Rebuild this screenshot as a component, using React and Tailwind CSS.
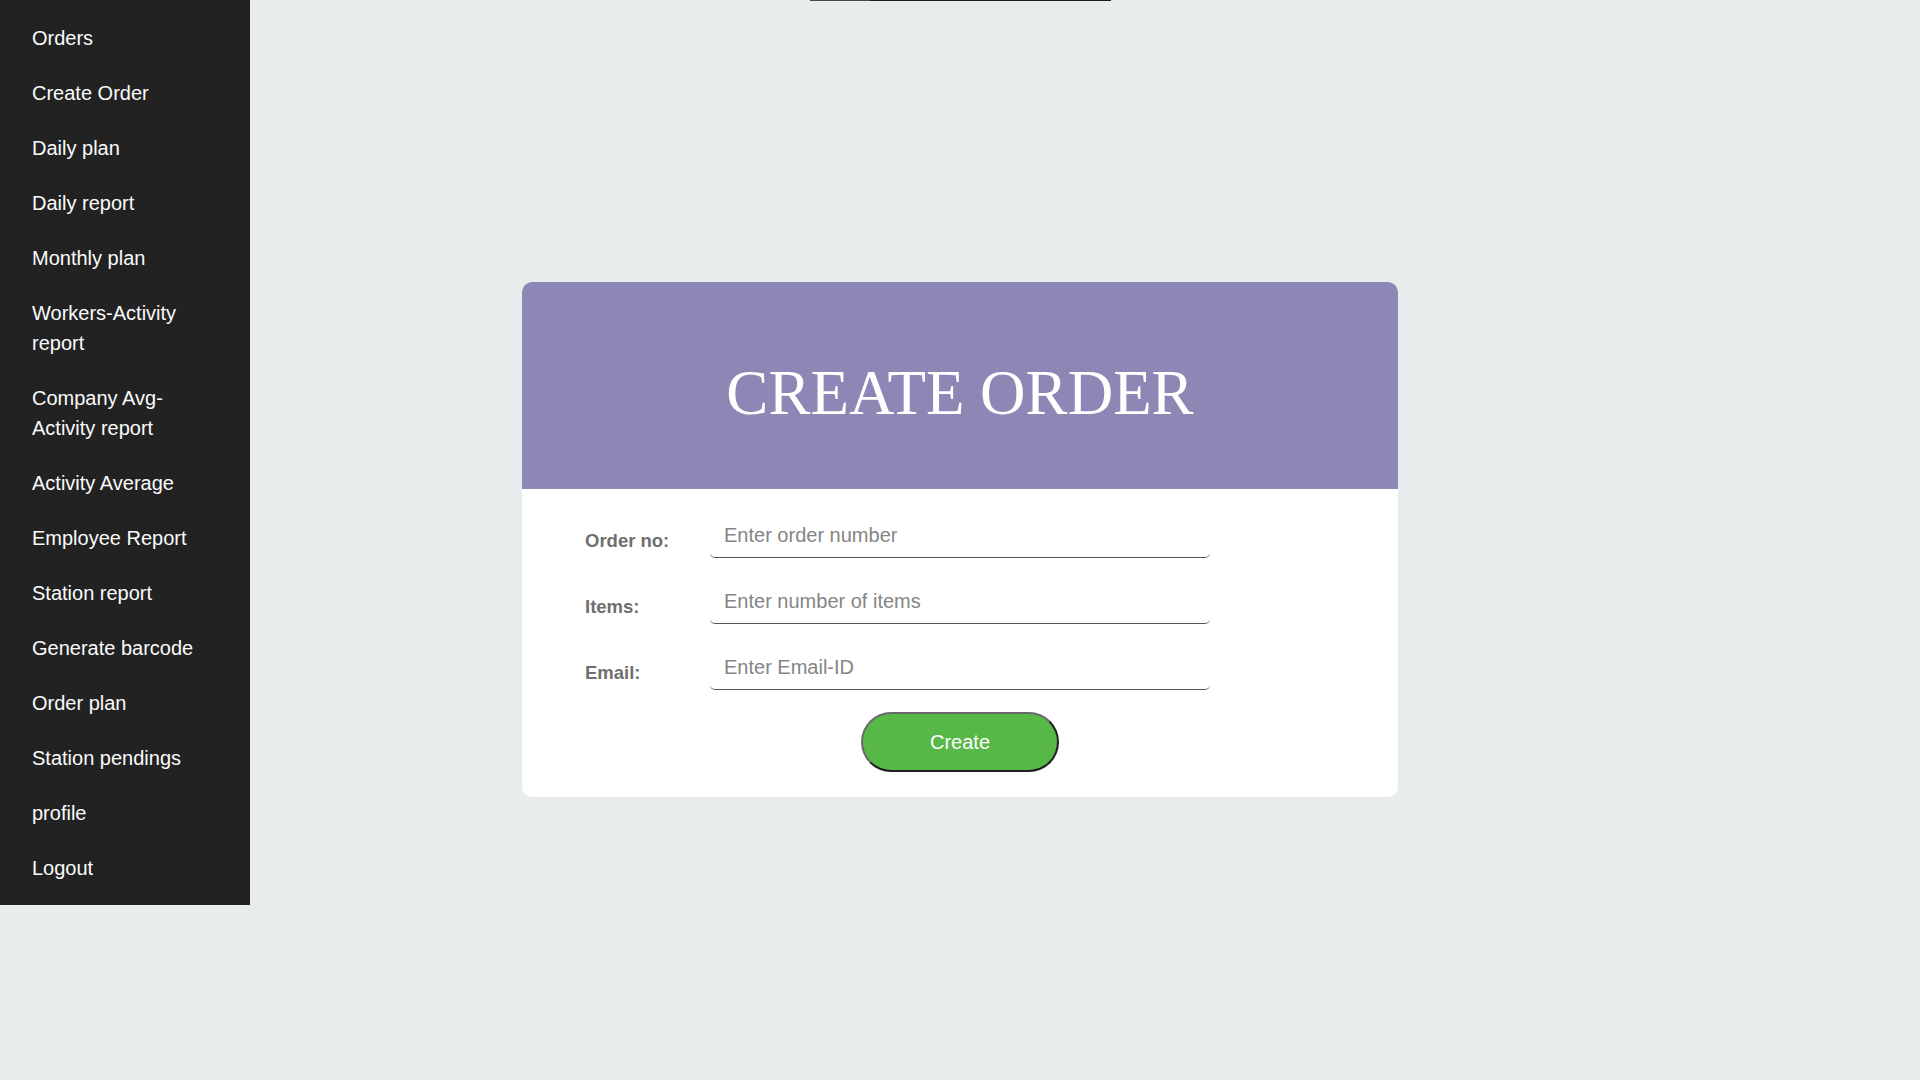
import React from "react";

const items = [
  "Orders",
  "Create Order",
  "Daily plan",
  "Daily report",
  "Monthly plan",
  "Workers-Activity report",
  "Company Avg-Activity report",
  "Activity Average",
  "Employee Report",
  "Station report",
  "Generate barcode",
  "Order plan",
  "Station pendings",
  "profile",
  "Logout",
];

function Row({ label, placeholder, type = "text" }) {
  return (
    <div className="flex items-start">
      <div className="w-[125px] mt-[16px] text-[18.5px] leading-[22px] font-bold text-[#6f6f6f]">{label}</div>
      <input
        type={type}
        placeholder={placeholder}
        className="w-[500px] h-[44px] pl-[14px] text-[20px] text-[#333] placeholder:text-[#858585] border-0 border-b border-[#555] rounded-[5px] outline-none bg-transparent"
      />
    </div>
  );
}

export default function App() {
  return (
    <div
      className="min-h-screen w-full bg-[#e9eced] flex items-start"
      style={{ fontFamily: '"Liberation Sans", Arial, sans-serif' }}
    >
      <nav className="w-[250px] shrink-0 bg-[#222222] py-[10px]">
        {items.map((t) => (
          <div
            key={t}
            className="pl-[32px] pr-[43px] py-[12.5px] text-[20px] leading-[30px] text-[#fafafa] cursor-pointer"
          >
            {t}
          </div>
        ))}
      </nav>
      <main className="flex-1 pr-[250px]">
        <div className="mx-auto w-[301px] h-[1px] flex">
          <div className="w-[60px] bg-[#4a4a4a]"></div>
          <div className="flex-1 bg-[#1e1e1e]"></div>
        </div>
        <div className="mx-auto mt-[281px] w-[876px] bg-white rounded-[10px] overflow-hidden">
          <div className="h-[207px] bg-[#8d87b6] flex items-center justify-center pt-[16px]">
            <h1
              className="text-[63px] leading-none text-white"
              style={{ fontFamily: '"Liberation Serif", "Times New Roman", serif' }}
            >
              CREATE ORDER
            </h1>
          </div>
          <div className="pt-[25px] pb-[24px] pl-[63px]">
            <div className="flex flex-col gap-[22px]">
              <Row label="Order no:" placeholder="Enter order number" />
              <Row label="Items:" placeholder="Enter number of items" />
              <Row label="Email:" placeholder="Enter Email-ID" type="email" />
            </div>
          </div>
          <div className="flex justify-center pb-[25px] -mt-[2px]">
            <button className="w-[198px] h-[60px] rounded-full bg-[#57b848] text-white text-[20px] border-2 border-t-[#6a6a6a] border-l-[#6a6a6a] border-r-[#1f1f1f] border-b-[#1f1f1f]">
              Create
            </button>
          </div>
        </div>
      </main>
    </div>
  );
}
